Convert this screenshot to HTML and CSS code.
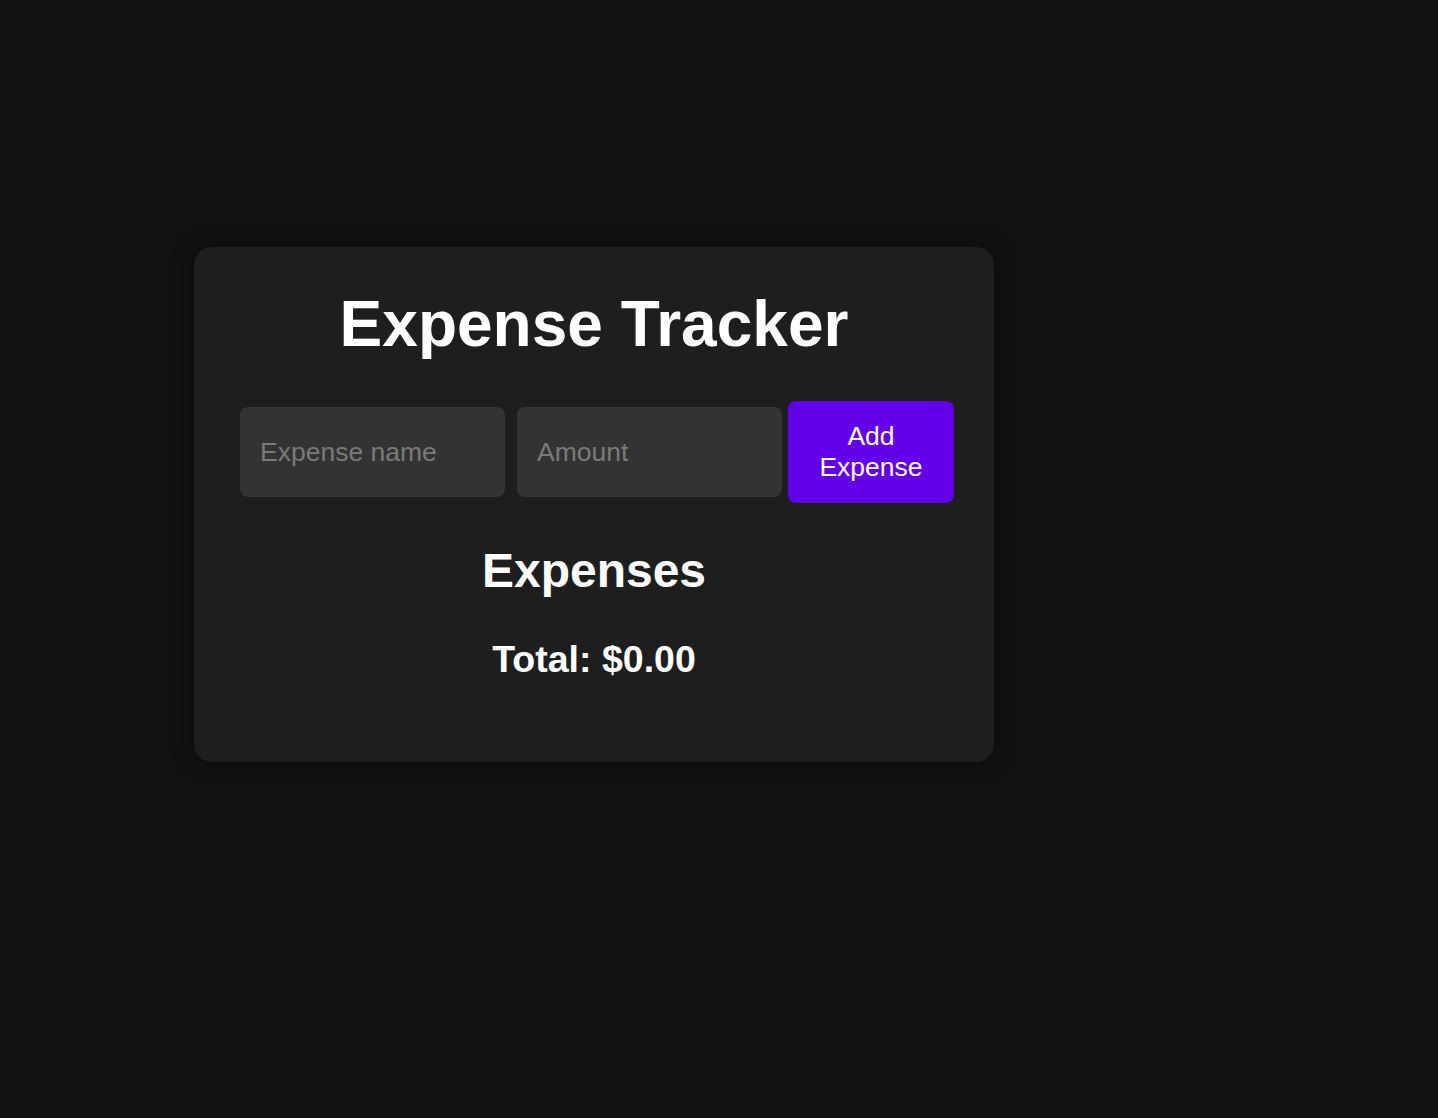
FILE: index.html
```html
<!DOCTYPE html>
<html lang="en">
<head>
<meta charset="utf-8">
<title>Expense Tracker</title>
<link rel="stylesheet" href="styles.css">
</head>
<body>
<div class="card">
  <h1 class="title">Expense Tracker</h1>
  <form class="form">
    <input class="field" type="text" placeholder="Expense name">
    <input class="field" type="number" placeholder="Amount">
    <button class="add-btn" type="button">Add Expense</button>
  </form>
  <h2 class="subtitle">Expenses</h2>
  <h3 class="total">Total: $0.00</h3>
</div>
</body>
</html>
```
FILE: styles.css
```css
html, body {
  margin: 0;
  background: #121212;
  font-family: "Liberation Sans", Arial, sans-serif;
  color: #fff;
}
body {
  padding: 247px 0 0 194px;
  min-height: 1118px;
  box-sizing: border-box;
}
.card {
  width: 800px;
  box-sizing: border-box;
  padding: 40px 40px 81px;
  background: #1e1e1e;
  border-radius: 18px;
  box-shadow: 0 0 24px rgba(0, 0, 0, 0.45);
  text-align: center;
}
.title {
  margin: 0 0 40px;
  font-size: 64px;
  font-weight: bold;
}
.form {
  display: flex;
  align-items: stretch;
  margin: 0 0 40px;
}
.field {
  flex: 1;
  min-width: 0;
  margin: 6px;
  height: 90px;
  box-sizing: border-box;
  padding: 0 20px;
  border: none;
  border-radius: 8px;
  background: #333;
  color: #fff;
  font-family: inherit;
  font-size: 26.5px;
  outline: none;
}
.field::placeholder { color: #7a7a7a; }
.field::-webkit-outer-spin-button,
.field::-webkit-inner-spin-button { -webkit-appearance: none; margin: 0; }
.add-btn {
  width: 166px;
  flex: none;
  border: none;
  border-radius: 8px;
  background: #6200ea;
  color: #fff;
  font-family: inherit;
  font-size: 26.5px;
  padding: 0 20px;
  line-height: 1.18;
}
.subtitle {
  margin: 0 0 40px;
  font-size: 48px;
  font-weight: bold;
}
.total {
  margin: 0;
  font-size: 37.5px;
  font-weight: bold;
}
```
